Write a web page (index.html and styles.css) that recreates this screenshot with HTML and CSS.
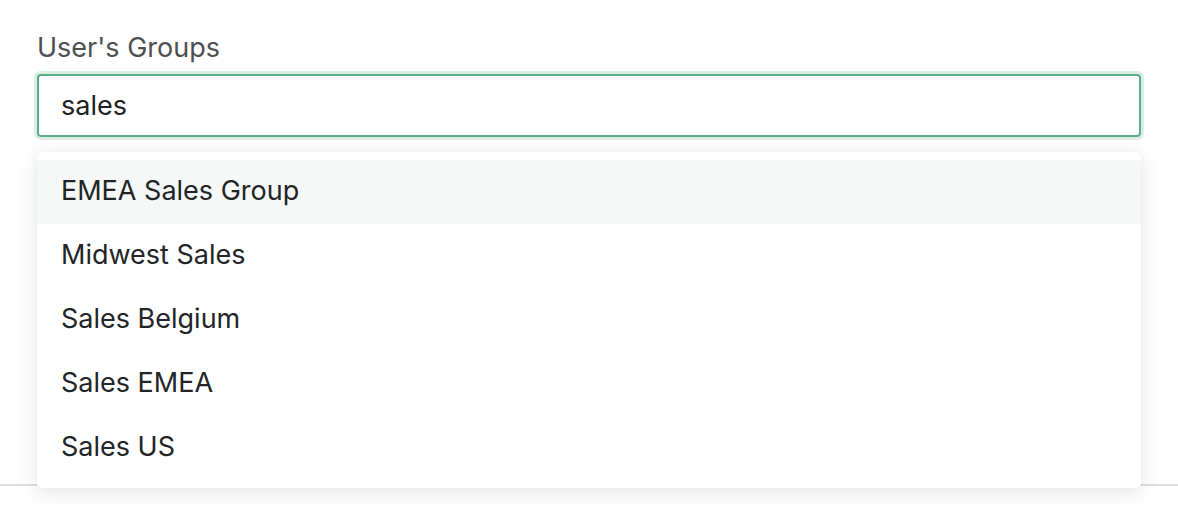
FILE: index.html
```html
<!DOCTYPE html>
<html>
<head>
<meta charset="utf-8">
<link rel="stylesheet" href="styles.css">
</head>
<body>
<div class="page">
  <div class="field">
    <label class="label">User's Groups</label>
    <div class="combo">
      <div class="input">sales</div>
      <ul class="menu">
        <li class="item active">EMEA Sales Group</li>
        <li class="item">Midwest Sales</li>
        <li class="item">Sales Belgium</li>
        <li class="item">Sales EMEA</li>
        <li class="item">Sales US</li>
      </ul>
    </div>
  </div>
  <div class="divider"></div>
</div>
</body>
</html>
```

FILE: styles.css
```css
html, body {
  margin: 0;
  padding: 0;
  background: #ffffff;
}
body {
  font-family: Inter, "Noto Sans", "Liberation Sans", sans-serif;
  color: #222426;
}
.page {
  width: 1178px;
  height: 508px;
  overflow: hidden;
}
.field {
  padding: 32px 37px 0 37px;
  width: 1104px;
  height: 452px;
}
.label {
  display: block;
  font-size: 27px;
  line-height: 32px;
  color: #4d4f52;
  margin-bottom: 10px;
}
.combo {
  position: relative;
}
.input {
  box-sizing: border-box;
  height: 63px;
  border: 2px solid #5aae87;
  border-radius: 4px;
  box-shadow: 0 0 0 3px #dbeee4;
  padding: 0 22px;
  font-size: 27px;
  line-height: 59px;
  color: #1f2123;
}
.menu {
  position: absolute;
  left: 0;
  right: 0;
  top: 78px;
  margin: 0;
  padding: 8px 0;
  list-style: none;
  background: #ffffff;
  border-radius: 5px;
  box-shadow: 0 4px 20px rgba(0, 0, 0, 0.11), 0 0 2px rgba(0, 0, 0, 0.06);
  z-index: 2;
}
.item {
  height: 64px;
  line-height: 62px;
  padding: 0 24px;
  font-size: 27px;
  color: #222426;
}
.item.active {
  background: #f5f8f7;
}
.divider {
  height: 2px;
  background: #dcdcdc;
}
```
